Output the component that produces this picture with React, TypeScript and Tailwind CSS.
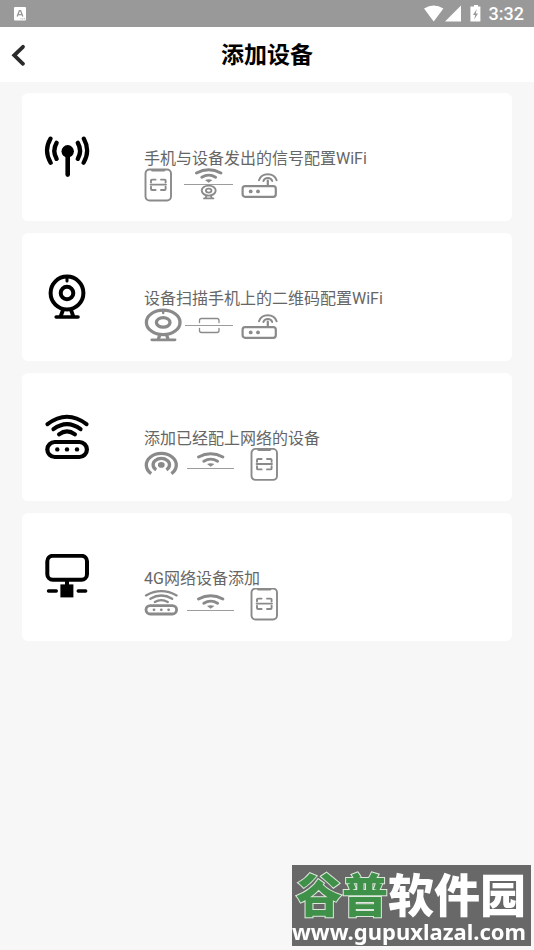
import type { ReactNode } from "react";

interface IMethod {
    title: string;
    icon: ReactNode;
    steps: ReactNode;
}

function AntennaIcon() {
    return (
        <svg width="46" height="46" viewBox="0 0 46 46" fill="none" stroke="#000" strokeWidth="4" strokeLinecap="round" aria-hidden="true">
            <circle cx="23.7" cy="17.3" r="6.2" fill="#000" stroke="none" />
            <path d="M23.7 20V40.6" strokeWidth="4.6" />
            <path d="M12.6 8.8Q8 16.8 12.6 24.8M33.8 8.8Q38.4 16.8 33.8 24.8" strokeWidth="4.4" />
            <path d="M6.5 4.6Q-0.6 16.7 6.7 28.8M39.8 4.6Q46.6 16.7 39.6 28.8" strokeWidth="4.2" />
        </svg>
    );
}

function CameraIcon() {
    return (
        <svg width="46" height="46" viewBox="0 0 46 46" fill="none" stroke="#000" strokeWidth="4" strokeLinecap="round" aria-hidden="true">
            <circle cx="23" cy="19" r="16.4" />
            <circle cx="23" cy="19" r="6.3" />
            <path d="M23 4V7" strokeWidth="3" />
            <path d="M19 36L16.8 42M27 36L29.2 42" strokeWidth="3.8" />
            <path d="M12.2 43H34" strokeWidth="3.6" />
        </svg>
    );
}

function RouterIcon() {
    return (
        <svg width="46" height="46" viewBox="0 0 46 46" fill="none" stroke="#000" strokeWidth="4" strokeLinecap="round" aria-hidden="true">
            <path d="M3.5 10.2Q23 -4.6 42.5 10.2" />
            <path d="M9.4 15.2Q23 5 36.6 15.2" />
            <path d="M15 20.3Q23 14.4 31 20.3" />
            <rect x="3.3" y="28" width="39.6" height="15" rx="7.5" strokeWidth="4.2" />
            <g fill="#000" stroke="none">
                <circle cx="13.3" cy="35.4" r="2.2" />
                <circle cx="23" cy="35.4" r="2.2" />
                <circle cx="33" cy="35.4" r="2.2" />
            </g>
        </svg>
    );
}

function NetworkIcon() {
    return (
        <svg width="46" height="46" viewBox="0 0 46 46" fill="none" stroke="#000" strokeWidth="4" aria-hidden="true">
            <rect x="3.3" y="1.8" width="39.7" height="24" rx="5.5" />
            <path d="M23 26V32" />
            <rect x="16.4" y="30.4" width="13" height="13" fill="#000" stroke="none" />
            <path d="M4.5 37H12.3M34.2 37H41.7" strokeWidth="3.4" strokeLinecap="round" />
        </svg>
    );
}

// Left, middle and right slots of the small step drawings
function Left({ children }: { children: ReactNode }) {
    return (
        <svg width="40" height="34" viewBox="0 0 40 34" fill="none" stroke="#8a8a8a" strokeLinecap="round" aria-hidden="true">
            {children}
        </svg>
    );
}

function Middle({ children }: { children: ReactNode }) {
    return (
        <svg width="50" height="34" viewBox="0 0 50 34" fill="none" stroke="#8a8a8a" strokeLinecap="round" aria-hidden="true">
            {children}
        </svg>
    );
}

function Right({ children }: { children: ReactNode }) {
    return (
        <svg width="44" height="34" viewBox="0 0 44 34" fill="none" stroke="#8a8a8a" strokeLinecap="round" aria-hidden="true">
            {children}
        </svg>
    );
}

function Phone() {
    return (
        <g strokeWidth="1.9">
            <rect x="1.5" y="1.5" width="25.5" height="31" rx="4" />
            <path d="M8.5 2.2H20" strokeWidth="2.6" />
            <path d="M7 14.5V12.6Q7 11.6 8 11.6H11.6M17 11.6H20.6Q21.6 11.6 21.6 12.6V14.5M7 18.8V21Q7 22 8 22H11.6M17 22H20.6Q21.6 22 21.6 21V18.8" />
            <path d="M6.6 16.6H22" />
        </g>
    );
}

function Wifi() {
    return (
        <g>
            <path d="M12.5 5Q24.7 -1.6 36.9 5" strokeWidth="2.9" />
            <path d="M17.8 9.2Q24.7 5 31.6 9.2" strokeWidth="2.9" />
            <path d="M21 12Q24.7 10.4 28.4 12L24.7 14.8Z" fill="#8a8a8a" stroke="none" />
        </g>
    );
}

function SmallRouter() {
    return (
        <g strokeWidth="2.2">
            <rect x="8.6" y="18.2" width="33.2" height="10.6" rx="2.5" />
            <path d="M33.8 12.6V18" />
            <path d="M25 12.2Q27 6.2 33.8 6.2T42.6 12.2" strokeWidth="2" />
            <path d="M29.4 13Q30.4 10 33.8 10T38.2 13" strokeWidth="2" />
            <g fill="#8a8a8a" stroke="none">
                <circle cx="16.7" cy="23.4" r="1.9" />
                <circle cx="24" cy="23.4" r="1.9" />
            </g>
        </g>
    );
}

function WifiLink({ lineY }: { lineY: number }) {
    return (
        <Middle>
            <g transform={`translate(2 ${lineY - 16})`}>
                <Wifi />
            </g>
            <path d={`M3 ${lineY + 0.5}H50`} stroke="#9c9c9c" strokeWidth="1" strokeLinecap="butt" />
        </Middle>
    );
}

const methods: IMethod[] = [
    {
        title: "手机与设备发出的信号配置WiFi",
        icon: <AntennaIcon />,
        steps: (
            <>
                <Left>
                    <Phone />
                </Left>
                <Middle>
                    <Wifi />
                    <path d="M0 16.5H49" stroke="#9c9c9c" strokeWidth="1" strokeLinecap="butt" />
                    <ellipse cx="24.7" cy="22.6" rx="7" ry="5" strokeWidth="1.9" />
                    <ellipse cx="24.7" cy="22.6" rx="2.8" ry="2" strokeWidth="1.8" />
                    <path d="M22.6 27.6L21.6 30M26.8 27.6L27.8 30M20 30.4H29.4" strokeWidth="1.8" />
                </Middle>
                <Right>
                    <SmallRouter />
                </Right>
            </>
        ),
    },
    {
        title: "设备扫描手机上的二维码配置WiFi",
        icon: <CameraIcon />,
        steps: (
            <>
                <Left>
                    <g strokeWidth="3.3">
                        <ellipse cx="19.2" cy="14.4" rx="16.8" ry="12.2" />
                        <ellipse cx="19.2" cy="14.4" rx="6.8" ry="4.8" />
                        <path d="M19.2 3V5" strokeWidth="2.4" />
                        <path d="M15.8 27L14.4 31M22.6 27L24 31" />
                        <path d="M7.8 31.8H31" strokeWidth="2.8" />
                    </g>
                </Left>
                <Middle>
                    <path d="M1 17.5H49" stroke="#9c9c9c" strokeWidth="1" strokeLinecap="butt" />
                    <path d="M15.5 14.6V12.5Q15.5 10.5 17.5 10.5H33Q35 10.5 35 12.5V14.6M15.5 20.4V22.5Q15.5 24.5 17.5 24.5H33Q35 24.5 35 22.5V20.4" strokeWidth="1.3" />
                </Middle>
                <Right>
                    <g transform="translate(0 1)">
                        <SmallRouter />
                    </g>
                </Right>
            </>
        ),
    },
    {
        title: "添加已经配上网络的设备",
        icon: <RouterIcon />,
        steps: (
            <>
                <Left>
                    <g strokeWidth="3.3" strokeLinecap="butt">
                        <path d="M7.2 25.6A15 11.6 0 1 1 27.4 25.6" />
                        <path d="M12.2 21.8A8.2 6.4 0 1 1 22.4 21.8" />
                        <ellipse cx="17.3" cy="16.9" rx="3.4" ry="2.8" fill="#8a8a8a" stroke="none" />
                    </g>
                </Left>
                <WifiLink lineY={20} />
                <Right>
                    <g transform="translate(16 -0.6)">
                        <Phone />
                    </g>
                </Right>
            </>
        ),
    },
    {
        title: "4G网络设备添加",
        icon: <NetworkIcon />,
        steps: (
            <>
                <Left>
                    <g strokeWidth="2.3">
                        <path d="M2 7.4Q17.3 -1 32.6 7.4" />
                        <path d="M6.4 10.8Q17.3 4.2 28.2 10.8" />
                        <path d="M10.8 14Q17.3 10.4 23.8 14" />
                        <rect x="2" y="17.6" width="30.6" height="8.4" rx="4.2" strokeWidth="2.8" />
                        <g fill="#8a8a8a" stroke="none">
                            <circle cx="10" cy="21.8" r="1.4" />
                            <circle cx="17.3" cy="21.8" r="1.4" />
                            <circle cx="24.6" cy="21.8" r="1.4" />
                        </g>
                    </g>
                </Left>
                <WifiLink lineY={22} />
                <Right>
                    <g transform="translate(16 -1)">
                        <Phone />
                    </g>
                </Right>
            </>
        ),
    },
];

function StatusBar() {
    return (
        <div className="flex h-[27px] items-center justify-between bg-[#999999] pr-[10px] pl-[14px] text-white">
            <svg width="12" height="14" viewBox="0 0 12 14" aria-hidden="true">
                <rect width="12" height="13.4" rx="1" fill="#fff" />
                <path d="M3.2 9.6L5.4 3.6H6.6L8.8 9.6M4 7.6H8" fill="none" stroke="#999" strokeWidth="1.4" />
                <path d="M6.4 11.8H11" stroke="#999" strokeWidth="0.8" strokeDasharray="1.2 0.6" />
            </svg>
            <div className="flex items-center">
                <svg width="57" height="18" viewBox="0 0 57 18" fill="#fff" aria-hidden="true">
                    <path d="M0 3.6Q9.7 -2.4 19.4 3.6L9.7 16.4Z" />
                    <path d="M37 0.6V16.6H21Z" />
                    <path d="M50 0H54V1.4H56.4V16.6H46.4V1.4H50Z" />
                    <path d="M52.8 4L49 10H51.2L50.2 14.4L54 8.4H51.8Z" fill="#999" />
                </svg>
                <span className="ml-2 font-[Roboto,sans-serif] text-lg leading-6 font-medium">3:32</span>
            </div>
        </div>
    );
}

function MethodCard({ title, icon, steps }: IMethod) {
    return (
        <button type="button" className="flex h-32 w-full gap-[54px] rounded-md bg-white pl-[22px] text-left">
            <span className="flex h-full shrink-0 items-center">{icon}</span>
            <span className="flex h-full flex-col pt-14">
                <span className="text-base leading-[19px] text-[#666666]">{title}</span>
                <span className="flex">{steps}</span>
            </span>
        </button>
    );
}

function Watermark() {
    return (
        <div className="fixed right-[3px] bottom-1 h-[81px] w-[239px] bg-[#686868] pt-1 whitespace-nowrap text-white">
            <p className="pl-1 font-['Noto_Sans_CJK_SC',sans-serif] text-[46px] leading-[46px] font-black">
                <span className="text-[#3f9048] [-webkit-text-stroke:2px_#dde8dd] [paint-order:stroke_fill]">谷普</span>
                软件园
            </p>
            <p className="font-['Noto_Sans','Open_Sans',sans-serif] text-[22px] leading-8 font-bold">www.gupuxlazal.com</p>
        </div>
    );
}

export default function App() {
    return (
        <div className="min-h-screen bg-[#f7f7f7] font-[Roboto,'Noto_Sans_CJK_SC',sans-serif]">
            <StatusBar />
            <header className="grid h-[55px] grid-cols-[48px_1fr_48px] items-center bg-white">
                <button type="button" aria-label="返回" className="pl-[11px]">
                    <svg width="15" height="24" viewBox="0 0 15 24" fill="none" stroke="#2b2b2b" strokeWidth="3.8" strokeLinecap="round" aria-hidden="true">
                        <path d="M12 3.8L3.2 12.3L12 20.8" />
                    </svg>
                </button>
                <h1 className="pt-0.5 text-center text-[23px] leading-8 font-bold text-black">添加设备</h1>
            </header>
            <main className="flex flex-col gap-3 px-[22px] pt-[11px]">
                {methods.map((method) => (
                    <MethodCard key={method.title} {...method} />
                ))}
            </main>
            <Watermark />
        </div>
    );
}
